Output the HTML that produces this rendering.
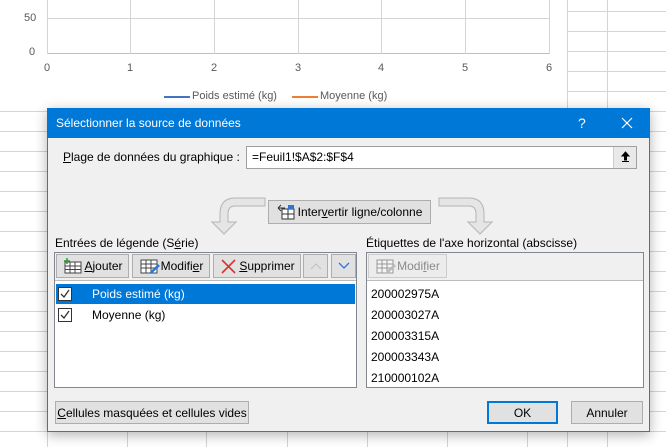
<!DOCTYPE html>
<html><head><meta charset="utf-8"><style>
*{box-sizing:border-box;margin:0;padding:0}
body{width:666px;height:447px;overflow:hidden;position:relative;background:#fff;font-family:"Liberation Sans",sans-serif;font-size:12px;color:#000}
.a{position:absolute}
.hl{position:absolute;height:1px;background:#d4d4d4}
.vl{position:absolute;width:1px;background:#d4d4d4}
.btn{position:absolute;background:#e1e1e1;border:1px solid #adadad;font-size:12px;display:flex;align-items:center;justify-content:center}
u{text-decoration:underline}
.t{font-size:11px;color:#595959;position:absolute}
.row{position:absolute;left:1px;right:1px;height:20px;line-height:20px}
</style></head><body>
<!-- sheet grid -->
<div class="vl" style="left:567px;top:0;height:447px"></div>
<div class="vl" style="left:607px;top:0;height:447px"></div>
<div class="hl" style="left:567px;width:99px;top:11px"></div>
<div class="hl" style="left:567px;width:99px;top:31px"></div>
<div class="hl" style="left:567px;width:99px;top:51px"></div>
<div class="hl" style="left:567px;width:99px;top:71px"></div>
<div class="hl" style="left:567px;width:99px;top:91px"></div>
<div class="hl" style="left:0;width:666px;top:111px"></div>
<div class="hl" style="left:0;width:666px;top:131px"></div>
<div class="hl" style="left:0;width:666px;top:151px"></div>
<div class="hl" style="left:0;width:666px;top:171px"></div>
<div class="hl" style="left:0;width:666px;top:191px"></div>
<div class="hl" style="left:0;width:666px;top:211px"></div>
<div class="hl" style="left:0;width:666px;top:231px"></div>
<div class="hl" style="left:0;width:666px;top:251px"></div>
<div class="hl" style="left:0;width:666px;top:271px"></div>
<div class="hl" style="left:0;width:666px;top:291px"></div>
<div class="hl" style="left:0;width:666px;top:311px"></div>
<div class="hl" style="left:0;width:666px;top:331px"></div>
<div class="hl" style="left:0;width:666px;top:351px"></div>
<div class="hl" style="left:0;width:666px;top:371px"></div>
<div class="hl" style="left:0;width:666px;top:391px"></div>
<div class="hl" style="left:0;width:666px;top:411px"></div>
<div class="hl" style="left:0;width:666px;top:431px"></div>
<div class="vl" style="left:47px;top:431px;height:16px"></div>
<div class="vl" style="left:127px;top:431px;height:16px"></div>
<div class="vl" style="left:206px;top:431px;height:16px"></div>
<div class="vl" style="left:287px;top:431px;height:16px"></div>
<div class="vl" style="left:367px;top:431px;height:16px"></div>
<div class="vl" style="left:447px;top:431px;height:16px"></div>
<div class="vl" style="left:527px;top:431px;height:16px"></div>
<!-- chart -->
<div class="a" style="left:0;top:0;width:567px;height:108px;background:#fff"></div>
<div class="hl" style="left:47px;width:503px;top:18px"></div>
<div class="a" style="left:47px;top:53px;width:503px;height:1px;background:#bfbfbf"></div>
<div class="vl" style="left:47px;top:0;height:54px"></div>
<div class="vl" style="left:130px;top:0;height:54px"></div>
<div class="vl" style="left:214px;top:0;height:54px"></div>
<div class="vl" style="left:298px;top:0;height:54px"></div>
<div class="vl" style="left:381px;top:0;height:54px"></div>
<div class="vl" style="left:465px;top:0;height:54px"></div>
<div class="vl" style="left:549px;top:0;height:54px"></div>
<div class="t" style="left:24px;top:12px">50</div>
<div class="t" style="left:29px;top:46px">0</div>
<div class="t" style="left:44px;top:62px">0</div>
<div class="t" style="left:127px;top:62px">1</div>
<div class="t" style="left:211px;top:62px">2</div>
<div class="t" style="left:295px;top:62px">3</div>
<div class="t" style="left:378px;top:62px">4</div>
<div class="t" style="left:462px;top:62px">5</div>
<div class="t" style="left:546px;top:62px">6</div>
<div class="a" style="left:164px;top:96px;width:26px;height:2px;background:#4472c4"></div>
<div class="t" style="left:192px;top:90px">Poids estimé (kg)</div>
<div class="a" style="left:292px;top:96px;width:26px;height:2px;background:#ed7d31"></div>
<div class="t" style="left:320px;top:90px">Moyenne (kg)</div>
<!-- dialog -->
<div class="a" style="left:47px;top:108px;width:603px;height:324px;background:#f0f0f0;border:1px solid #1a7fd6;box-shadow:0 3px 12px rgba(0,0,0,.3)">
 <div class="a" style="left:-1px;top:-1px;width:603px;height:30px;background:#0078d7;color:#fff;font-size:12px;line-height:30px;padding-left:9px">Sélectionner la source de données
  <span class="a" style="left:531px;top:0;font-size:14px">?</span>
  <svg class="a" style="left:574px;top:9px" width="12" height="12"><path d="M1 1L11 11M11 1L1 11" stroke="#fff" stroke-width="1.2"/></svg>
 </div>
</div>
<div class="a" style="left:63px;top:150px"><u>P</u>lage de données du graphique :</div>
<div class="a" style="left:246px;top:146px;width:391px;height:23px;background:#fff;border:1px solid #a0a0a0;padding:3px 0 0 5px">=Feuil1!$A$2:$F$4</div>
<div class="a" style="left:613px;top:147px;width:23px;height:21px;background:#e9e9e9;border-left:1px solid #ccc"><svg width="23" height="21"><path d="M11.5 5L8 9H10.5V13H12.5V9H15ZM8 14.5H15" stroke="#000" fill="#000" stroke-width="1"/></svg></div>
<!-- arrows -->
<svg class="a" style="left:200px;top:196px" width="70" height="42"><path d="M65 2H35Q20 2 20 18V26H12L24 38L36 26H28V18Q28 10 35 10H65Z" fill="#e5e5e5" stroke="#b5b5b5"/></svg>
<svg class="a" style="left:437px;top:196px" width="70" height="42"><path d="M2 2H32Q47 2 47 18V26H55L43 38L31 26H39V18Q39 10 32 10H2Z" fill="#e5e5e5" stroke="#b5b5b5"/></svg>
<div class="btn" style="left:268px;top:200px;width:163px;height:24px">
 <svg width="18" height="16" style="margin-right:3px"><rect x="5" y="5" width="12" height="10" fill="#fff" stroke="#333"/><path d="M5 10H17M11 5V15" stroke="#333"/><rect x="11" y="1" width="6" height="4" fill="#2e75d6"/><path d="M1 4L4 1M1 4L4 7M1 4H8" stroke="#333" fill="none"/></svg>Inter<u>v</u>ertir ligne/colonne</div>
<div class="a" style="left:55px;top:236px">Entrées de légende (S<u>é</u>rie)</div>
<div class="a" style="left:366px;top:236px">Étiquettes de l'axe horizontal (abscisse)</div>
<!-- left box -->
<div class="a" style="left:54px;top:252px;width:303px;height:136px;background:#fff;border:1px solid #828790">
 <div class="a" style="left:0;top:0;width:301px;height:28px;background:#f0f0f0;border-bottom:1px solid #bbb"></div>
 <div class="row" style="top:31px;background:#0078d7;color:#fff;padding-left:36px">Poids estimé (kg)</div>
 <div class="row" style="top:52px;padding-left:36px">Moyenne (kg)</div>
 <svg class="a" style="left:3px;top:34px" width="14" height="14"><rect x=".5" y=".5" width="13" height="13" fill="#fff" stroke="#333"/><path d="M3 7L6 10L11 3" stroke="#333" fill="none" stroke-width="1.3"/></svg>
 <svg class="a" style="left:3px;top:55px" width="14" height="14"><rect x=".5" y=".5" width="13" height="13" fill="#fff" stroke="#333"/><path d="M3 7L6 10L11 3" stroke="#333" fill="none" stroke-width="1.3"/></svg>
</div>
<div class="btn" style="left:56px;top:254px;width:73px;height:24px"><svg width="22" height="16"><rect x="3" y="4" width="16" height="11" fill="#fff" stroke="#444"/><path d="M3 8H19M3 11.5H19M8 4V15M13 4V15" stroke="#444"/><path d="M5 0V6M2 3H8" stroke="#2a9d3a" stroke-width="1.5"/></svg><u>A</u>jouter</div>
<div class="btn" style="left:132px;top:254px;width:78px;height:24px"><svg width="22" height="16"><rect x="2" y="2" width="16" height="13" fill="#fff" stroke="#444"/><path d="M2 6H18M2 10H18M7 2V15M12 2V15" stroke="#444"/><path d="M10 15L19 6L21 8L12 16Z" fill="#2e75d6"/></svg>Modifi<u>e</u>r</div>
<div class="btn" style="left:213px;top:254px;width:88px;height:24px"><svg width="20" height="16"><path d="M3 2L16 15M16 2L3 15" stroke="#e03030" stroke-width="1.6"/></svg><u>S</u>upprimer</div>
<div class="btn" style="left:303px;top:254px;width:25px;height:24px"><svg width="12" height="8"><path d="M1 7L6 2L11 7" stroke="#c0c0c0" fill="none"/></svg></div>
<div class="btn" style="left:331px;top:254px;width:25px;height:24px"><svg width="12" height="8"><path d="M1 1L6 6L11 1" stroke="#2e75d6" fill="none" stroke-width="1.3"/></svg></div>
<!-- right box -->
<div class="a" style="left:366px;top:252px;width:278px;height:136px;background:#fff;border:1px solid #828790">
 <div class="a" style="left:0;top:0;width:276px;height:28px;background:#f0f0f0;border-bottom:1px solid #bbb"></div>
 <div class="row" style="top:31px;padding-left:3px">200002975A</div>
 <div class="row" style="top:52px;padding-left:3px">200003027A</div>
 <div class="row" style="top:73px;padding-left:3px">200003315A</div>
 <div class="row" style="top:94px;padding-left:3px">200003343A</div>
 <div class="row" style="top:115px;padding-left:3px">210000102A</div>
</div>
<div class="btn" style="left:368px;top:254px;width:79px;height:24px;color:#8a8a8a;background:#ececec;border-color:#ccc"><svg width="22" height="16" opacity=".5"><rect x="2" y="2" width="16" height="13" fill="#fff" stroke="#444"/><path d="M2 6H18M2 10H18M7 2V15M12 2V15" stroke="#444"/><path d="M10 15L19 6L21 8L12 16Z" fill="#888"/></svg>Modi<u>f</u>ier</div>
<!-- bottom -->
<div class="btn" style="left:55px;top:401px;width:194px;height:23px"><span><u>C</u>ellules masquées et cellules vides</span></div>
<div class="btn" style="left:487px;top:401px;width:71px;height:23px;border:2px solid #0078d7">OK</div>
<div class="btn" style="left:571px;top:401px;width:72px;height:23px">Annuler</div>
</body></html>
